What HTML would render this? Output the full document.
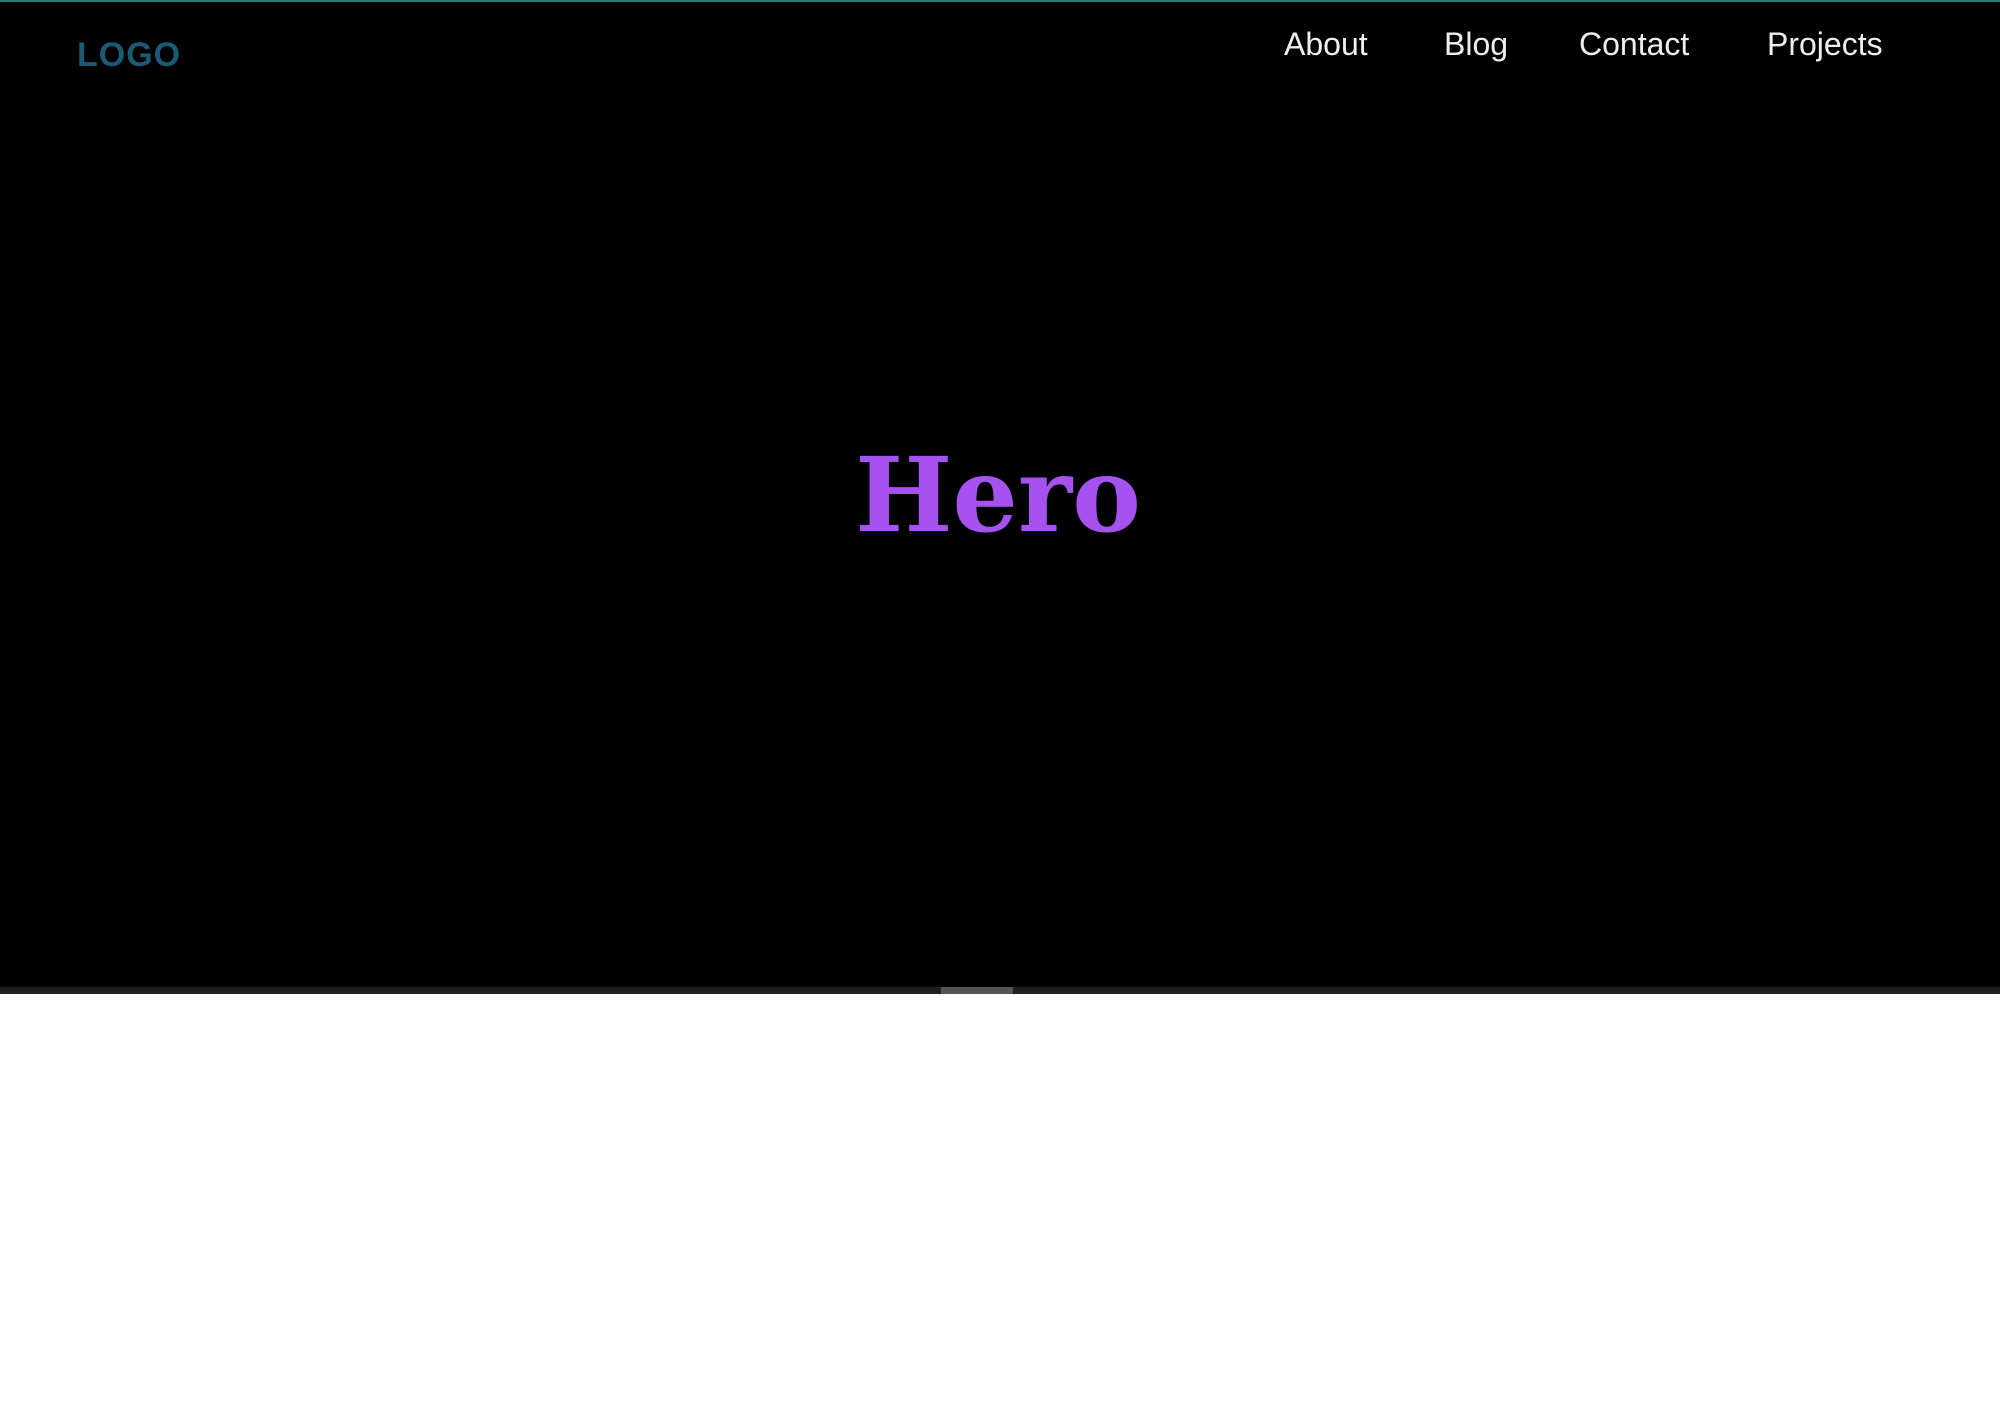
<!DOCTYPE html>
<html><head><style>
html,body{margin:0;padding:0;width:2000px;height:1414px;background:#fff;overflow:hidden;font-family:"Liberation Sans",sans-serif}
.hero{position:absolute;left:0;top:0;width:2000px;height:994px;background:#000;border-top:2px solid #2a7a80;box-sizing:border-box}
.logo{position:absolute;left:77px;top:34px;font-size:34px;font-weight:bold;color:#1a5a75;letter-spacing:1px}
.nav a{position:absolute;top:24px;font-size:32px;color:#eee;text-decoration:none}
h1{position:absolute;left:0;width:1996px;text-align:center;top:442px;margin:0;font-family:"DejaVu Serif",serif;font-weight:bold;font-size:103px;color:#a652f0;line-height:1}
.strip{position:absolute;left:0;top:987px;width:2000px;height:7px;background:#1f1f1f}
.seg{position:absolute;left:941px;top:987px;width:72px;height:7px;background:#555}
</style></head><body>
<div class="hero">
<div class="logo">LOGO</div>
<div class="nav"><a style="left:1284px">About</a><a style="left:1444px">Blog</a><a style="left:1579px">Contact</a><a style="left:1767px">Projects</a></div>
<h1>Hero</h1>
</div>
<div class="strip"></div><div class="seg"></div>
</body></html>
